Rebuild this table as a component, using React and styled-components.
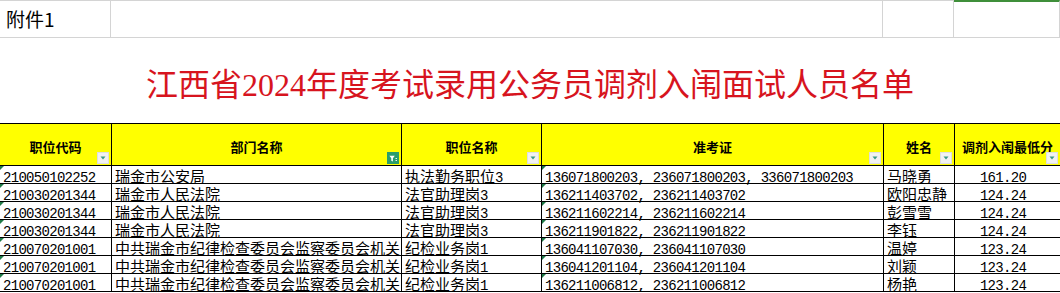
import React from 'react';
import styled, { createGlobalStyle, css } from 'styled-components';

const CJK = '"Noto Sans CJK SC", "Noto Sans CJK TC", sans-serif';

const GlobalStyle = createGlobalStyle`
  html, body {
    margin: 0;
    padding: 0;
    background: #ffffff;
    overflow: hidden;
  }
`;

const COLS = '112px 290px 140px 342px 71px 106px';

const columns = [
  { title: '职位代码' },
  { title: '部门名称', filtered: true },
  { title: '职位名称' },
  { title: '准考证' },
  { title: '姓名' },
  { title: '调剂入闱最低分' },
];

const dept = '中共瑞金市纪律检查委员会监察委员会机关';

const rows = [
  ['210050102252', '瑞金市公安局', '执法勤务职位3', '136071800203, 236071800203, 336071800203', '马晓勇', '161.20'],
  ['210030201344', '瑞金市人民法院', '法官助理岗3', '136211403702, 236211403702', '欧阳忠静', '124.24'],
  ['210030201344', '瑞金市人民法院', '法官助理岗3', '136211602214, 236211602214', '彭雪雪', '124.24'],
  ['210030201344', '瑞金市人民法院', '法官助理岗3', '136211901822, 236211901822', '李钰', '124.24'],
  ['210070201001', dept, '纪检业务岗1', '136041107030, 236041107030', '温婷', '123.24'],
  ['210070201001', dept, '纪检业务岗1', '136041201104, 236041201104', '刘颖', '123.24'],
  ['210070201001', dept, '纪检业务岗1', '136211006812, 236211006812', '杨艳', '123.24'],
];

// columns holding numbers stored as text get Excel's green corner mark
const flagged = [true, false, false, true, false, false];

const Sheet = styled.div`
  width: 1060px;
  overflow: hidden;
  font-family: ${CJK};
  color: #000;
`;

const TopRow = styled.div`
  display: grid;
  grid-template-columns: 111px 772px 71px 106px;
  height: 38px;
`;

const TopCell = styled.div`
  box-sizing: border-box;
  height: 38px;
  border-top: 1px solid #d4d4d4;
  border-bottom: 1px solid #d4d4d4;
  border-right: 1px solid #d4d4d4;
  padding-left: 6px;
  font-size: 19px;
  line-height: 36px;
  white-space: nowrap;

  ${(p) =>
    p.$selected &&
    css`
      border-top: 2px solid #3f8f3a;
      line-height: 35px;
    `}
`;

const TitleRow = styled.div`
  height: 85px;
  display: flex;
  justify-content: center;
  align-items: center;
  padding-top: 3px;
  box-sizing: border-box;
`;

const Title = styled.h1`
  margin: 0;
  font-family: "Liberation Serif", ${CJK};
  font-weight: 400;
  font-size: 32px;
  color: #d7141e;
  white-space: nowrap;
`;

const Table = styled.div`
  border-top: 1px solid #000;
`;

const Row = styled.div`
  display: grid;
  grid-template-columns: ${COLS};
`;

const HeadCell = styled.div`
  position: relative;
  box-sizing: border-box;
  height: 42px;
  background: #ffff00;
  border-right: 1px solid #000;
  border-bottom: 1px solid #000;
  display: flex;
  align-items: center;
  justify-content: center;
  padding-top: 3px;
  font-size: 13px;
  font-weight: 700;
  white-space: nowrap;
`;

const FilterButton = styled.span`
  position: absolute;
  right: 2px;
  bottom: 1px;
  width: 12px;
  height: 12px;
  box-sizing: border-box;
  display: flex;
  align-items: center;
  justify-content: center;
  background: ${(p) => (p.$active ? '#2a9d6c' : '#f1f1f1')};
  border: 1px solid ${(p) => (p.$active ? '#2a9d6c' : '#dedede')};
`;

const Cell = styled.div`
  position: relative;
  box-sizing: border-box;
  height: 18px;
  border-right: 1px solid #000;
  border-bottom: 1px solid #000;
  padding: 2px 2px 0 3px;
  font-size: 15px;
  line-height: 15px;
  white-space: nowrap;
  text-align: ${(p) => (p.$center ? 'center' : 'left')};
  padding-right: ${(p) => (p.$center ? '12px' : '2px')};

  ${(p) =>
    p.$flag &&
    css`
      &::before {
        content: '';
        position: absolute;
        left: 0;
        top: 0;
        border-top: 4px solid #1f7a47;
        border-right: 4px solid transparent;
      }
    `}
`;

const Latin = styled.span`
  font-family: "Liberation Mono", monospace;
  font-size: 14px;
  letter-spacing: -0.7px;
`;

const mixed = (text) =>
  text.split(/([\x00-\x7F]+)/).map((part, i) =>
    /^[\x00-\x7F]+$/.test(part) ? <Latin key={i}>{part}</Latin> : part
  );

const DropIcon = () => (
  <svg width="8" height="6" viewBox="0 0 8 6">
    <polygon points="1.5,1.5 6.5,1.5 4,4.5" fill="#3a9a86" />
  </svg>
);

const FunnelIcon = () => (
  <svg width="11" height="11" viewBox="0 0 11 11">
    <path d="M1.5 2.5h6L5.4 5.2v3.6L3.6 8V5.2z" fill="#ffffff" />
    <rect x="8.3" y="5" width="1.6" height="1" fill="#ffffff" />
    <rect x="8.3" y="7.2" width="1.6" height="1" fill="#ffffff" />
  </svg>
);

export default function App() {
  return (
    <>
      <GlobalStyle />
      <Sheet>
        <TopRow>
          <TopCell>附件1</TopCell>
          <TopCell />
          <TopCell />
          <TopCell $selected />
        </TopRow>

        <TitleRow>
          <Title>江西省2024年度考试录用公务员调剂入闱面试人员名单</Title>
        </TitleRow>

        <Table>
          <Row>
            {columns.map((col) => (
              <HeadCell key={col.title}>
                {col.title}
                <FilterButton $active={col.filtered}>
                  {col.filtered ? <FunnelIcon /> : <DropIcon />}
                </FilterButton>
              </HeadCell>
            ))}
          </Row>
          {rows.map((row, r) => (
            <Row key={r}>
              {row.map((value, c) => (
                <Cell key={c} $flag={flagged[c]} $center={c === 5}>
                  {mixed(value)}
                </Cell>
              ))}
            </Row>
          ))}
        </Table>
      </Sheet>
    </>
  );
}
